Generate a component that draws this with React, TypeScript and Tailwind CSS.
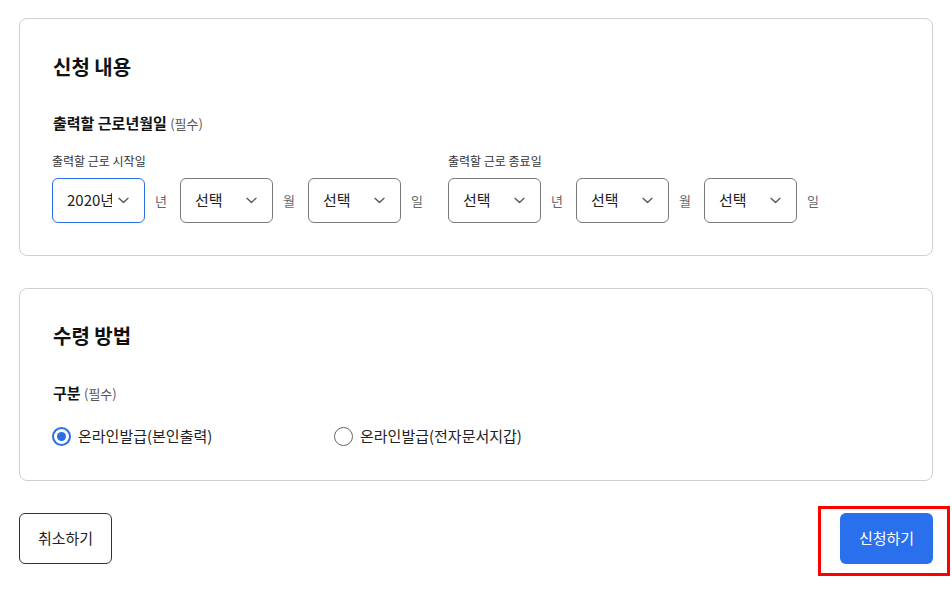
import React from 'react';

const font = { fontFamily: '"Noto Sans CJK KR", "Noto Sans", sans-serif' };

const Chevron = () => (
  <svg width="11" height="7" viewBox="0 0 11 7" fill="none" className="ml-[6px] shrink-0">
    <path d="M1 1.2L5.5 5.5L10 1.2" stroke="#555" strokeWidth="1.3" strokeLinecap="round" strokeLinejoin="round" />
  </svg>
);

const SelectBox = ({ value, active }: { value: string; active?: boolean }) => (
  <div
    className={
      active
        ? 'flex h-[45px] w-[93px] items-center rounded-[6px] border border-[#2b6fe6] pl-[14px] pr-[15px] text-[15px] text-[#222]'
        : 'flex h-[45px] w-[93px] items-center rounded-[6px] border border-[#7a7a7a] pl-[14px] pr-[15px] text-[15px] text-[#222]'
    }
  >
    <span className="flex-1 overflow-hidden whitespace-nowrap">{value}</span>
    <Chevron />
  </div>
);

const Unit = ({ label }: { label: string }) => (
  <span className="ml-[10px] mr-[12px] w-[13px] text-[13px] text-[#666]">{label}</span>
);

const DateGroup = ({ label, first }: { label: string; first?: string }) => (
  <div className="flex flex-col">
    <div className="mb-[9px] text-[12px] leading-[16px] text-[#333]">{label}</div>
    <div className="flex items-center">
      <SelectBox value={first ?? '선택'} active={!!first} />
      <Unit label="년" />
      <SelectBox value="선택" />
      <Unit label="월" />
      <SelectBox value="선택" />
      <Unit label="일" />
    </div>
  </div>
);

const Radio = ({ label, checked }: { label: string; checked?: boolean }) => (
  <label className="flex items-center gap-[7px] text-[15px] text-[#222]">
    <span
      className={
        checked
          ? 'flex h-[19px] w-[19px] items-center justify-center rounded-full border-2 border-[#2b6fe6]'
          : 'flex h-[19px] w-[19px] items-center justify-center rounded-full border border-[#666]'
      }
    >
      {checked && <span className="h-[9px] w-[9px] rounded-full bg-[#2b6fe6]" />}
    </span>
    {label}
  </label>
);

export default function App() {
  return (
    <div className="min-h-[589px] w-[952px] bg-white" style={font}>
      <div className="px-[19px] pt-[18px]">
        {/* 신청 내용 */}
        <section className="h-[238px] rounded-[8px] border border-[#cfcfcf] px-[32px] pt-[34px]">
          <h2 className="pl-px text-[20px] font-bold leading-[28px] text-[#111]">신청 내용</h2>
          <div className="mt-[31px] pl-px text-[15px] font-bold leading-[22px] text-[#111]">
            출력할 근로년월일 <span className="text-[13px] font-normal text-[#555]">(필수)</span>
          </div>
          <div className="mt-[18px] flex gap-[12px]">
            <DateGroup label="출력할 근로 시작일" first="2020년" />
            <DateGroup label="출력할 근로 종료일" />
          </div>
        </section>

        {/* 수령 방법 */}
        <section className="mt-[32px] h-[193px] rounded-[8px] border border-[#cfcfcf] px-[32px] pt-[33px]">
          <h2 className="pl-px text-[20px] font-bold leading-[28px] text-[#111]">수령 방법</h2>
          <div className="mt-[32px] pl-px text-[15px] font-bold leading-[22px] text-[#111]">
            구분 <span className="text-[13px] font-normal text-[#555]">(필수)</span>
          </div>
          <div className="mt-[20px] flex items-center">
            <div className="w-[282px]">
              <Radio label="온라인발급(본인출력)" checked />
            </div>
            <Radio label="온라인발급(전자문서지갑)" />
          </div>
        </section>

        <div className="mt-[32px] flex items-center justify-between">
          <button className="h-[51px] w-[93px] rounded-[6px] border border-[#333] text-[15px] text-[#222]">
            취소하기
          </button>
          <div className="relative">
            <button className="h-[51px] w-[93px] rounded-[6px] bg-[#2a6fec] text-[15px] text-white">
              신청하기
            </button>
            <div className="pointer-events-none absolute -left-[22px] -right-[17px] -top-[7px] -bottom-[12px] border-[3px] border-[#ff0000]" />
          </div>
        </div>
      </div>
    </div>
  );
}
